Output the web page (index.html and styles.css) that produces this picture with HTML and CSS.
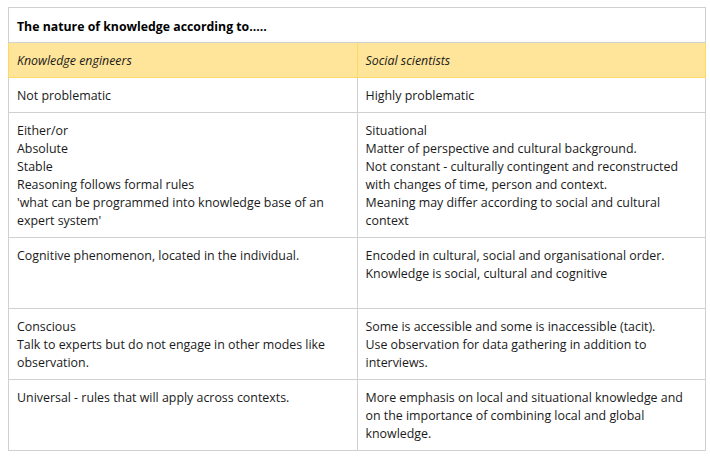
FILE: index.html
```html
<!DOCTYPE html>
<html>
<head>
<meta charset="utf-8">
<link rel="stylesheet" href="styles.css">
</head>
<body>
<div class="page">
<table class="kt">
  <tr class="title-row"><td colspan="2">The nature of knowledge according to.....</td></tr>
  <tr class="head-row"><td>Knowledge engineers</td><td>Social scientists</td></tr>
  <tr><td>Not problematic</td><td>Highly problematic</td></tr>
  <tr>
    <td>Either/or<br>Absolute<br>Stable<br>Reasoning follows formal rules<br>'what can be programmed into knowledge base of an expert system'</td>
    <td>Situational<br>Matter of perspective and cultural background.<br>Not constant - culturally contingent and reconstructed with changes of time, person and context.<br>Meaning may differ according to social and cultural context</td>
  </tr>
  <tr class="tall"><td>Cognitive phenomenon, located in the individual.</td><td>Encoded in cultural, social and organisational order.<br>Knowledge is social, cultural and cognitive</td></tr>
  <tr class="tall"><td>Conscious<br>Talk to experts but do not engage in other modes like observation.</td><td>Some is accessible and some is inaccessible (tacit).<br>Use observation for data gathering in addition to interviews.</td></tr>
  <tr class="tall"><td>Universal - rules that will apply across contexts.</td><td>More emphasis on local and situational knowledge and on the importance of combining local and global knowledge.</td></tr>
</table>
</div>
</body>
</html>
```
FILE: styles.css
```css
html, body { margin: 0; padding: 0; background: #fff; }
.page { padding: 7px 0 0 8px; }
.kt {
  width: 698px;
  border-collapse: collapse;
  table-layout: fixed;
  font-family: "Open Sans", "Noto Sans", sans-serif;
  font-size: 12.4px;
  line-height: 18px;
  color: #1a1a1a;
}
.kt td {
  border: 1px solid #d0d0d0;
  padding: 9px 8px 7px 8px;
  vertical-align: top;
  width: 50%;
}
.title-row td {
  font-weight: bold;
  color: #000;
  font-size: 12.3px;
  padding-top: 10px;
  padding-bottom: 6px;
}
.head-row td {
  background: #ffe599;
  border-color: #ffd966;
  font-style: italic;
}
.tall td { height: 54px; }
```
